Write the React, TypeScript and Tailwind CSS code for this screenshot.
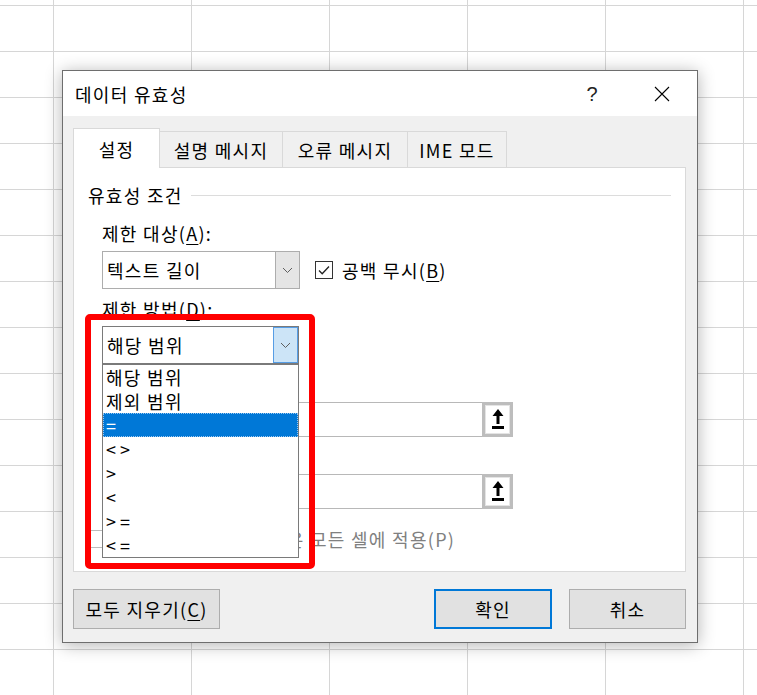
import React from 'react';

function Chevron() {
  return (
    <svg width="11" height="7" viewBox="0 0 11 7">
      <path d="M1 1l4.5 4.5L10 1" fill="none" stroke="#5f5f5f" strokeWidth="1" />
    </svg>
  );
}

function CloseIcon() {
  return (
    <svg width="16" height="16" viewBox="0 0 16 16">
      <path d="M1 1l14 14M15 1L1 15" stroke="#000" strokeWidth="1.1" />
    </svg>
  );
}

function CollapseIcon() {
  return (
    <svg width="12" height="21" viewBox="0 0 12 21">
      <polygon points="6,0 0.5,7 4.5,7 4.5,15 7.5,15 7.5,7 11.5,7" fill="#000" />
      <rect x="0" y="17" width="12" height="3" fill="#000" />
    </svg>
  );
}

function Key({ k }: { k: string }) {
  return <span className="underline underline-offset-[3px]">{k}</span>;
}

function Checkbox({ checked, disabled }: { checked?: boolean; disabled?: boolean }) {
  return (
    <div
      className={
        disabled
          ? 'flex h-[18px] w-[18px] shrink-0 items-center justify-center border border-[#bcbcbc] bg-white'
          : 'flex h-[18px] w-[18px] shrink-0 items-center justify-center border border-[#333333] bg-white'
      }
    >
      {checked && (
        <svg width="14" height="14" viewBox="0 0 14 14">
          <path d="M2 7.5l3.2 3.2L12 3.5" fill="none" stroke="#222" strokeWidth="1.3" />
        </svg>
      )}
    </div>
  );
}

function RangeInput() {
  return (
    <div className="flex h-[35px] w-[411px]">
      <div className="flex-1 border border-r-0 border-[#b8b8b8] bg-white" />
      <div className="flex w-[31px] items-center justify-center border-[3px] border-[#bdbdbd] bg-[#e4e4e4] p-[1px]">
        <div className="flex h-full w-full items-center justify-center bg-white">
          <CollapseIcon />
        </div>
      </div>
    </div>
  );
}

const operators = ['해당 범위', '제외 범위', '=', '< >', '>', '<', '> =', '< ='];

export default function App() {
  return (
    <div className="relative h-[695px] w-[757px] overflow-hidden bg-white bg-[linear-gradient(to_right,#d6d6d6_1px,transparent_1px),linear-gradient(to_bottom,#d6d6d6_1px,transparent_1px)] [background-position:53px_5px] [background-size:138px_46px] font-['Noto_Sans_CJK_KR','Noto_Sans',sans-serif] text-[18px] leading-[24px] tracking-[1.3px] text-black">
      {/* dialog window */}
      <div className="absolute left-[62px] top-[70px] flex h-[573px] w-[636px] flex-col border border-[#6e6e6e] bg-[#f0f0f0] shadow-[0_2px_16px_rgba(0,0,0,0.3)]">
        <div className="flex h-[45px] shrink-0 items-center bg-white">
          <span className="flex-1 pl-[12px]">데이터 유효성</span>
          <div className="flex h-full w-[70px] items-center justify-center font-['Liberation_Sans',sans-serif] text-[20px] font-light tracking-normal text-[#222]">
            ?
          </div>
          <div className="flex h-full w-[70px] items-center justify-center">
            <CloseIcon />
          </div>
        </div>

        <div className="flex flex-1 flex-col pb-[13px] pl-[10px] pr-[11px] pt-[12px]">
          {/* tabs */}
          <div className="flex h-[39px] shrink-0 items-end">
            <div className="relative z-10 -mb-px flex h-[40px] w-[87px] items-center justify-center border border-b-0 border-[#d9d9d9] bg-white">
              설정
            </div>
            <div className="flex h-[36px] w-[123px] items-center justify-center border-r border-t border-[#d9d9d9] bg-[#f0f0f0]">
              설명 메시지
            </div>
            <div className="flex h-[36px] w-[125px] items-center justify-center border-r border-t border-[#d9d9d9] bg-[#f0f0f0]">
              오류 메시지
            </div>
            <div className="flex h-[36px] w-[99px] items-center justify-center border-r border-t border-[#d9d9d9] bg-[#f0f0f0]">
              IME 모드
            </div>
          </div>

          {/* settings panel */}
          <div className="flex h-[405px] shrink-0 flex-col border border-[#d9d9d9] bg-white px-[14px]">
            <div className="mt-[15px] flex h-[24px] items-center">
              <span>유효성 조건</span>
              <div className="ml-[8px] h-px flex-1 bg-[#dcdcdc]" />
            </div>

            <div className="flex flex-col pl-[14px]">
              <div className="mt-[14px] h-[24px]">
                제한 대상(<Key k="A" />):
              </div>
              <div className="mt-[6px] flex h-[38px] items-center">
                <div className="flex h-full w-[198px] border border-[#adadad] bg-white">
                  <span className="flex flex-1 items-center pl-[4px]">텍스트 길이</span>
                  <div className="flex w-[24px] items-center justify-center border-l border-[#adadad] bg-[#e5e5e5]">
                    <Chevron />
                  </div>
                </div>
                <div className="ml-[15px]">
                  <Checkbox checked />
                </div>
                <span className="ml-[9px]">
                  공백 무시(<Key k="B" />)
                </span>
              </div>

              <div className="mt-[8px] h-[24px]">
                제한 방법(<Key k="D" />):
              </div>
              <div className="relative mt-[5px] h-[38px] w-[197px]">
                <div className="flex h-full w-full border border-[#7a7a7a] bg-white">
                  <span className="flex flex-1 items-center pl-[4px]">해당 범위</span>
                  <div className="flex w-[25px] items-center justify-center border border-[#569de5] bg-[#cce4f7]">
                    <Chevron />
                  </div>
                </div>
                {/* open dropdown list */}
                <div className="absolute left-0 top-full z-20 w-full border border-[#7a7a7a] bg-white">
                  {operators.map((op, i) => (
                    <div
                      key={op}
                      className={
                        i === 2
                          ? 'flex h-[24px] items-center border border-dotted border-[#9cc8f0] bg-[#0078d7] pl-[2px] text-white'
                          : i < 2
                            ? 'flex h-[24px] items-center pl-[3px]'
                            : 'flex h-[24px] items-center pl-[3px] tracking-normal'
                      }
                    >
                      {op}
                    </div>
                  ))}
                </div>
              </div>

              <div className="mt-[9px] h-[24px]">
                최소값(<Key k="M" />):
              </div>
              <div className="mt-[5px]">
                <RangeInput />
              </div>
              <div className="mt-[11px] h-[24px]">
                최대값(<Key k="X" />):
              </div>
              <div className="mt-[2px]">
                <RangeInput />
              </div>
            </div>

            <div className="mt-[21px] flex h-[18px] items-center text-[#808080]">
              <Checkbox disabled />
              <span className="ml-[4px]">변경 내용을 설정이 같은 모든 셀에 적용(P)</span>
            </div>
          </div>

          {/* buttons */}
          <div className="mt-[17px] flex h-[40px] shrink-0">
            <button className="flex w-[147px] items-center justify-center border border-[#adadad] bg-[#e1e1e1]">
              모두 지우기(<Key k="C" />)
            </button>
            <button className="ml-auto flex w-[118px] items-center justify-center border-2 border-[#0078d7] bg-[#e1e1e1]">
              확인
            </button>
            <button className="ml-[17px] flex w-[117px] items-center justify-center border border-[#adadad] bg-[#e1e1e1]">
              취소
            </button>
          </div>
        </div>
      </div>

      {/* red highlight frame */}
      <div className="absolute left-[85px] top-[314px] z-30 h-[255px] w-[230px] rounded-[5px] border-[6px] border-[#ff0000]" />
    </div>
  );
}
